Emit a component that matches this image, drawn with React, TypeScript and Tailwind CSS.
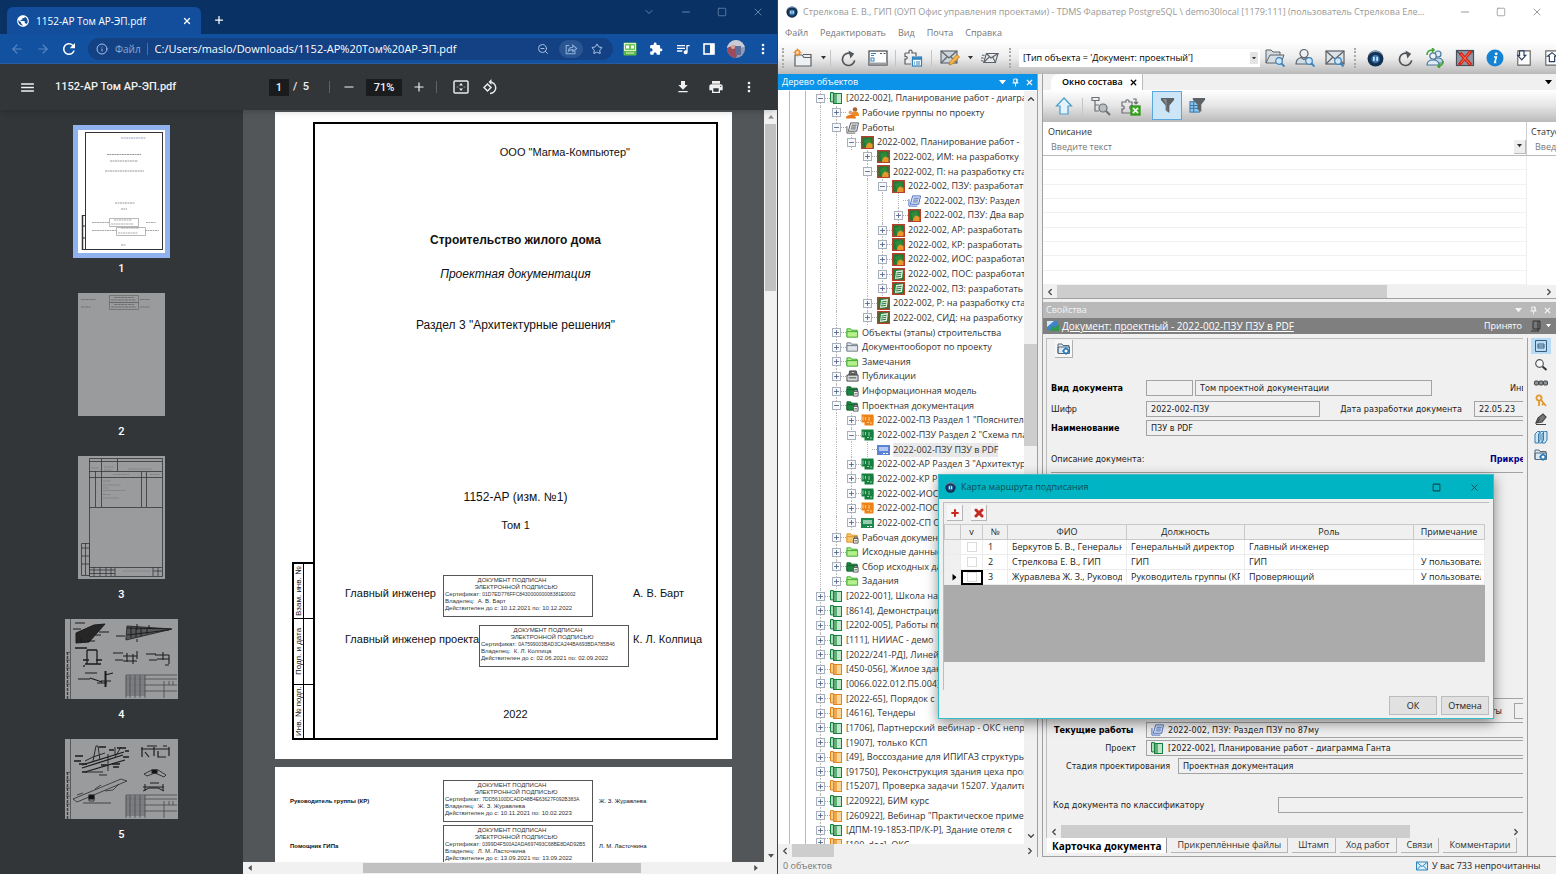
import React from 'react';
import {
    ArrowLeft, ArrowRight, ChevronDown, ChevronLeft, ChevronRight, ChevronUp, Info, Minus, Plus,
    Square, Star, X, ZoomOut,
} from 'lucide-react';
import {
    MdDownload, MdExtension, MdMenu, MdMoreVert, MdPrint, MdPublic, MdQueueMusic, MdRefresh,
} from 'react-icons/md';

type IconProps = { className?: string };

/* ---------- browser window ---------- */

const ShareIcon = () => (
    <svg viewBox="0 0 16 16" className="w-3.5 h-3.5" fill="none" stroke="#8fb1de" strokeWidth="1.2">
        <path d="M6 4H2.5v9.5h10V10" />
        <path d="M5 10.500C5.300 7.500 7.500 6 10 6V3.500L14.500 7.300 10 11V8.700C8 8.700 6.300 9 5 10.500Z" />
    </svg>
);

const RobotIcon = () => (
    <svg viewBox="0 0 14 14" className="w-3.5 h-3.5">
        <rect x="0.500" y="0.500" width="13" height="13" rx="1" fill="#5dbb46" />
        <path d="M1 1h12v8H1z" fill="#d9f3cf" />
        <rect x="2" y="2" width="10" height="6" rx="1" fill="#6cc455" />
        <rect x="3" y="3.500" width="3" height="3" fill="#fff" />
        <rect x="8" y="3.500" width="3" height="3" fill="#fff" />
        <path d="M3 11h8" stroke="#dff2d9" />
    </svg>
);

const PanelIcon = () => (
    <svg viewBox="0 0 12 12" className="w-3 h-3">
        <rect x="1" y="1" width="10" height="10" fill="none" stroke="#fff" strokeWidth="1.600" />
        <rect x="7" y="1" width="4" height="10" fill="#fff" />
    </svg>
);

const AvatarIcon = () => (
    <svg viewBox="0 0 18 18" className="w-[18px] h-[18px]">
        <defs>
            <clipPath id="avatar"><circle cx="9" cy="9" r="9" /></clipPath>
        </defs>
        <g clipPath="url(#avatar)">
            <rect width="18" height="18" fill="#8f9ab5" />
            <path d="M0 0h18v7L0 9z" fill="#c9cbd6" />
            <path d="M0 8 7 5l5 5-3 8H0z" fill="#9b4b5c" />
            <path d="M8 6h6v9H9z" fill="#5d6f99" />
            <circle cx="6" cy="7" r="2" fill="#d7a89b" />
        </g>
    </svg>
);

const FitPageIcon = () => (
    <svg viewBox="0 0 16 14" className="w-4 h-3.5" fill="none" stroke="#e8eaed" strokeWidth="1.500">
        <rect x="1" y="1" width="14" height="12" rx="1" />
        <path d="M6 5.500 8 3l2 2.500zM6 8.500 8 11l2-2.500z" fill="#e8eaed" stroke="none" />
        <path d="M3.500 7h2M10.500 7h2" strokeWidth="1" opacity=".5" />
    </svg>
);

const RotateIcon = () => (
    <svg viewBox="0 0 16 16" className="w-4 h-4" fill="none" stroke="#e8eaed" strokeWidth="1.500">
        <path d="M5.500 5 9 8.500 5.500 12 2 8.500z" />
        <path d="M8 3a5.500 5.500 0 1 1 0 11.500" />
        <path d="M9.500 0 6.500 3l3 3z" fill="#e8eaed" stroke="none" />
    </svg>
);

const BrowserChrome = () => (
    <header className="flex-none text-white">
        <div className="h-[34px] bg-[#0a3163] flex items-end">
            <div className="ml-[7px] h-[27px] w-[194px] rounded-t-md bg-[#124e9c] flex items-center px-[9px]">
                <MdPublic className="w-3.5 h-3.5 mr-[6px]" />
                <span className="text-[10px] flex-1 whitespace-nowrap">1152-АР Том АР-ЭП.pdf</span>
                <button aria-label="Закрыть вкладку"><X className="w-[10px] h-[10px]" strokeWidth={3} /></button>
            </div>
            <button aria-label="Новая вкладка" className="ml-3 mb-2"><Plus className="w-3 h-3" strokeWidth={2.5} /></button>
            <div className="ml-auto self-start h-6 flex items-center gap-[25px] pr-[13px] text-[#6483ab]">
                <button aria-label="Поиск вкладок"><ChevronDown className="w-3 h-3" /></button>
                <button aria-label="Свернуть"><Minus className="w-3 h-3" /></button>
                <button aria-label="Развернуть"><Square className="w-[10px] h-[10px]" /></button>
                <button aria-label="Закрыть"><X className="w-3 h-3" /></button>
            </div>
        </div>
        <div className="h-[30px] bg-[#1250a0] border-b border-[#2a5c9f] flex items-center pl-[10px] pr-[12px]">
            <button aria-label="Назад" className="text-[#5a87c4] mr-3"><ArrowLeft className="w-3.5 h-3.5" /></button>
            <button aria-label="Вперёд" className="text-[#5a87c4] mr-[10px]"><ArrowRight className="w-3.5 h-3.5" /></button>
            <button aria-label="Обновить"><MdRefresh className="w-[18px] h-[18px]" /></button>
            <div className="ml-[10px] flex-1 h-[22px] rounded-full bg-[#134183] flex items-center pl-2">
                <Info className="w-3 h-3 text-[#a9c0e2]" />
                <label htmlFor="url" className="text-[10px] text-[#8ba8d2] ml-[7px] pr-[6px] border-r border-[#4c6fa5] leading-3">Файл</label>
                <input
                    id="url"
                    className="flex-1 min-w-0 ml-[7px] text-[11px] bg-transparent outline-none"
                    defaultValue="C:/Users/maslo/Downloads/1152-АР%20Том%20АР-ЭП.pdf"
                />
                <button aria-label="Масштаб" className="text-[#a9c0e2] mr-[10px]"><ZoomOut className="w-3 h-3" /></button>
                <button aria-label="Поделиться" className="w-6 h-[18px] rounded-full bg-[#2a5593] flex items-center justify-center mr-2"><ShareIcon /></button>
                <button aria-label="Закладка" className="text-[#b7cbe8] mr-[10px]"><Star className="w-3 h-3" /></button>
            </div>
            <div className="flex items-center ml-[10px] gap-3">
                <RobotIcon />
                <MdExtension className="w-3.5 h-3.5" />
                <MdQueueMusic className="w-4 h-4" />
                <PanelIcon />
                <AvatarIcon />
            </div>
            <button aria-label="Меню" className="ml-[10px] -mr-[6px]"><MdMoreVert className="w-4 h-4" /></button>
        </div>
    </header>
);

const PdfToolbar = () => (
    <div className="flex-none h-[46px] bg-[#323639] shadow-md relative flex items-center text-[#f1f1f1] font-[Roboto,sans-serif] text-[11px] font-medium">
        <button aria-label="Боковая панель" className="ml-[19px]"><MdMenu className="w-[17px] h-[17px]" /></button>
        <h1 className="ml-[19px] w-[214px] whitespace-nowrap">1152-АР Том АР-ЭП.pdf</h1>
        <input aria-label="Страница" defaultValue="1" className="w-5 h-[17px] bg-[#191b1c] text-center" />
        <span className="ml-1">/&nbsp; 5</span>
        <span className="w-px h-3 bg-[#5f6265] ml-5 mr-3" />
        <button aria-label="Уменьшить"><Minus className="w-3.5 h-3.5" /></button>
        <input aria-label="Масштаб страницы" defaultValue="71%" className="w-9 h-[17px] bg-[#191b1c] text-center mx-[10px]" />
        <button aria-label="Увеличить"><Plus className="w-3.5 h-3.5" /></button>
        <span className="w-px h-3 bg-[#5f6265] ml-[10px] mr-4" />
        <button aria-label="По размеру страницы"><FitPageIcon /></button>
        <button aria-label="Повернуть" className="ml-[13px]"><RotateIcon /></button>
        <div className="ml-auto flex items-center gap-[17px] pr-5">
            <button aria-label="Скачать"><MdDownload className="w-4 h-4" /></button>
            <button aria-label="Печать"><MdPrint className="w-4 h-4" /></button>
            <button aria-label="Ещё"><MdMoreVert className="w-4 h-4" /></button>
        </div>
    </div>
);

const ThumbTitle = () => (
    <svg viewBox="0 0 87 123" className="w-full h-full bg-white" fill="none" stroke="#333">
        <rect x="7.500" y="2.500" width="77" height="117" />
        <path d="M4 85.500h4M4 119.500h4M4 96h4M4 108h4" />
        <path d="M4.500 85v35" strokeWidth="1.500" />
        <g stroke="#999" strokeDasharray="2 .5">
            <path d="M43 8h25" stroke="#9aa2c2" />
            <path d="M29 24.500h34M32 31h28M27 41h39M37 73h20M43 79h6M43 115h5" />
            <path d="M14 92.500h17M14 100.500h24M68 92.500h10M67 100.500h14" stroke="#aaa" />
            <path d="M36 90h18M33 94h22M43 98h18M40 103h20" stroke="#aaa" />
        </g>
        <path d="M31.500 88.500h29v8h-29zM38.500 97.500h29v8h-29z" stroke="#999" strokeWidth=".7" />
    </svg>
);

const ThumbSigns = () => (
    <svg viewBox="0 0 87 123" className="w-full h-full bg-[#9a9b9d]" fill="none" stroke="#666">
        <path d="M3 6.500h15M3 14h10M62 6.500h10M62 14h10" strokeDasharray="2 .5" strokeWidth=".8" />
        <path d="M31.500 2.500h29v7h-29zM31.500 9.500h29v7h-29z" strokeWidth=".7" />
        <path d="M36 4.500h20M33 7h25M36 11.500h20M33 14h25" strokeDasharray="3 .5" strokeWidth=".8" />
    </svg>
);

const ThumbContents = () => (
    <svg viewBox="0 0 87 123" className="w-full h-full bg-[#9a9b9d]" fill="none" stroke="#33363a">
        <path d="M11.500 2.500h73v118h-73zM11 5.500h73M11 15.500h73M11 21.500h73M11 51.500h73M23.500 2.500v49M39.500 2.500v13M17.500 15v36M63.500 15v36M68.500 15v36M11 111.500h73" strokeWidth=".8" />
        <path d="M3.500 87.500h8v32h-8zM7.500 87v32M3 92h8M3 100h8M3 108h8M11 114h26M11 117.500h26M16 111v9M22 111v9M28 111v9M33 111v9M37 111v9M75 111v9M80 111v9M75 115h9" strokeWidth=".8" />
        <path d="M25 25h8M25 29h18M25 32h6M25 34.500h22M25 38.500h8M25 42h16M50 13h24M26 11h10M26 14h8M13 12h8M35 18.500h16M72 18.500h10M45 115h28" stroke="#777" strokeDasharray="2 .5" strokeWidth=".7" />
    </svg>
);

const SheetFrame = () => (
    <g strokeWidth=".7" stroke="#3a3d40">
        <path d="M5.500 0v80M1 33.500h4M1 41h4M1 49h4M1 57h4M1 65h4" />
        <path d="M2.500 33v47" strokeDasharray="3 1" strokeWidth="1.500" />
        <path d="M61 56v23M61 56h51M61 60h51M61 66h51M61 72h51M80 56v23M99 62v17M104 62v4M108 62v4" />
        <path d="M61 58h19M61 62h19M61 64h19M61 68h19M61 70h19M61 74h19M61 76h19M65 56v23M70 56v23M75 56v23" strokeWidth=".6" />
    </g>
);

const ThumbNodes = () => (
    <svg viewBox="0 0 113 80" className="w-full h-full bg-[#9a9b9d]" fill="none" stroke="#1d1d1d">
        <SheetFrame />
        <path d="M11 14 29 6l11-1-16 18-13 1z" fill="#262626" />
        <path d="M10 4h10M34 13h10M8 10h8M30 16h6M22 22h8M16 24v-5" strokeWidth="1.200" />
        <path d="m61 19 1-12 45 3-46 11z" fill="#55585a" strokeWidth=".8" />
        <path d="M62 9l44 1M62 16l42-5M66 8v11M71 9v9M76 9v8M82 10v5M51 17h9M72 5v6M84 6v4M72 20v3" strokeWidth="1" />
        <path d="M22 31h10M22 31v14M32 31v14M18 41h6M31 41h6M20 45h16M10 29h12M19 46v2" strokeWidth="1.300" />
        <path d="M48 34h10M58 37h14M58 42h14M50 41h8M62 34v9M68 35v10M72 32v8M81 35h10M90 36h14M84 41h8M92 40h12M98 33v8M104 36v9M100 46h4" strokeWidth="1.100" />
        <path d="M36 62h10M20 54h12M13 60h12M25 59l12 4M32 64h10M40 56l8-2" strokeWidth="1.200" />
        <path d="M40.500 52v16" strokeWidth="2" />
    </svg>
);

const ThumbRoof = () => (
    <svg viewBox="0 0 113 80" className="w-full h-full bg-[#9a9b9d]" fill="none" stroke="#1d1d1d">
        <SheetFrame />
        <path d="m17 26 42-13M17 29l41-13M20 33l40-12" strokeWidth="1.300" />
        <path d="M28 22 31 7h2l2 14M20 22l8-4 12-4M43 15v17M50 8v8M56 8l-6 10M22 33h16M34 36h8" strokeWidth=".9" />
        <path d="M34 8h7M44 11h5M52 9h9M10 17h8M9 22h7M14 25h8M60 12h4M58 18h6M47 25h8M36 26h6M48 28h6M17 33h5" strokeWidth="1.300" />
        <path d="m8 60 48-20 6 2-50 21zM30 50l6-4M40 52l8-1 6-6M24 57h5v5h-5zM18 64h28M12 56l6-2" strokeWidth=".7" />
        <rect x="24" y="56" width="5" height="4" fill="#111" />
        <path d="M76 10h28M77 8v10M89 8v9M104 8v9M80 13l4 5M93 12v6h8M82 7h10M98 7h4" strokeWidth="1.200" />
        <path d="m79 35 8-4h6l8 5-2 2-9-4-8 3z" strokeWidth=".8" />
        <rect x="87" y="31" width="5" height="3" fill="#111" />
        <path d="M78 48h21M80 45v7M98 45v7M78 52l6-3h9l6 3M85 44h9" strokeWidth="1" />
    </svg>
);

const thumbs = [
    { page: 1, art: <ThumbTitle />, box: 'w-[97px] h-[133px] border-[#8fb2ee]' },
    { page: 2, art: <ThumbSigns />, box: 'w-[97px] h-[133px] border-transparent' },
    { page: 3, art: <ThumbContents />, box: 'w-[97px] h-[133px] border-transparent' },
    { page: 4, art: <ThumbNodes />, box: 'w-[123px] h-[90px] border-transparent' },
    { page: 5, art: <ThumbRoof />, box: 'w-[123px] h-[90px] border-transparent' },
];

const Stamp = ({ cert, owner, from, to }: { cert: string; owner: string; from: string; to: string }) => (
    <div className="w-[150px] h-[42px] flex-none border border-[#555] text-[6px] leading-[7px] text-[#333] whitespace-nowrap overflow-hidden pt-px px-px">
        <p className="text-center pr-3">ДОКУМЕНТ ПОДПИСАН</p>
        <p className="text-center pr-1">ЭЛЕКТРОННОЙ ПОДПИСЬЮ</p>
        <p>Сертификат: <span className="text-[5px]">{cert}</span></p>
        <p>Владелец:&nbsp; {owner}</p>
        <p>Действителен до с: {from} по: {to}</p>
    </div>
);

const PdfPages = () => (
    <div className="flex-1 min-h-0 overflow-hidden pt-[2px] font-['Liberation_Sans',sans-serif] text-[#111]">
        <article className="w-[457px] mx-auto bg-white flex pt-[10px] pr-[14px] pb-[19px]">
            <div className="w-[38px] flex-none flex flex-col justify-end items-end">
                {[
                    { text: 'Взам. инв. №', h: 'h-[56px]' },
                    { text: 'Подп. и дата', h: 'h-[66px]' },
                    { text: 'Инв. № подп.', h: 'h-[56px]' },
                ].map((cell) => (
                    <div key={cell.text} className={`${cell.h} w-[21px] flex border-t border-l-2 border-black last:border-b-2 first:border-t-2`}>
                        <span className="w-[10px] border-l border-black text-[8px] leading-[9px] text-center whitespace-nowrap [writing-mode:vertical-rl] [text-orientation:sideways] rotate-180">
                            {cell.text}
                        </span>
                    </div>
                ))}
            </div>
            <div className="flex-1 border-2 border-black text-[11px] leading-4 pt-5 pb-4">
                <p className="text-right pr-[86px]">ООО "Магма-Компьютер"</p>
                <div className="text-center text-xs leading-4">
                    <h2 className="mt-[72px] font-bold">Строительство жилого дома</h2>
                    <p className="mt-[18px] italic">Проектная документация</p>
                    <p className="mt-[35px]">Раздел 3 "Архитектурные решения"</p>
                    <p className="mt-[156px]">1152-АР (изм. №1)</p>
                    <p className="mt-3 text-[11px]">Том 1</p>
                </div>
                <div className="mt-[42px] pl-[30px] flex">
                    <span className="w-[98px] pt-[10px] whitespace-nowrap">Главный инженер</span>
                    <Stamp cert="01D7ED776FFC843000000008381E0002" owner="А. В. Барт" from="10.12.2021" to="10.12.2022" />
                    <span className="ml-10 pt-[10px] whitespace-nowrap">А. В. Барт</span>
                </div>
                <div className="mt-2 pl-[30px] flex">
                    <span className="w-[134px] pt-[6px] whitespace-nowrap">Главный инженер проекта</span>
                    <Stamp cert="0A7599003BAD3CA244BA693BDA785B46" owner="К. Л. Колпица" from="02.06.2021" to="02.09.2022" />
                    <span className="ml-1 pt-[6px] whitespace-nowrap">К. Л. Колпица</span>
                </div>
                <p className="mt-[39px] text-center">2022</p>
            </div>
        </article>
        <article className="w-[457px] mx-auto mt-2 bg-white h-[200px] pt-[13px] pl-[15px] text-[6px] flex flex-col gap-[3px]">
            <div className="flex items-center">
                <b className="w-[153px]">Руководитель группы (КР)</b>
                <Stamp cert="7DD56100DCADD48B4E63627F092B383A" owner="Ж. З. Журавлева" from="10.11.2021" to="10.02.2023" />
                <span className="ml-[6px]">Ж. З. Журавлева</span>
            </div>
            <div className="flex items-center">
                <b className="w-[153px]">Помощник ГИПа</b>
                <Stamp cert="0399D4F500A2ADA697493C68BE8DAD92B5" owner="Л. М. Ласточкина" from="13.09.2021" to="13.09.2022" />
                <span className="ml-[6px]">Л. М. Ласточкина</span>
            </div>
        </article>
    </div>
);

const Browser = () => (
    <section className="w-1/2 flex flex-col min-w-0 border-r border-[#31435c]">
        <BrowserChrome />
        <PdfToolbar />
        <div className="flex-1 min-h-0 flex">
            <aside className="w-[243px] flex-none bg-[#323639] overflow-hidden pt-[15px]">
                <ol className="flex flex-col items-center gap-[13px] font-[Roboto,sans-serif]">
                    {thumbs.map((thumb) => (
                        <li key={thumb.page} className="flex flex-col items-center gap-1">
                            <div className={`border-[5px] ${thumb.box}`}>{thumb.art}</div>
                            <span className="text-[11px] leading-[13px] font-medium text-white">{thumb.page}</span>
                        </li>
                    ))}
                </ol>
            </aside>
            <main className="flex-1 min-w-0 bg-[#525659] flex flex-col">
                <div className="flex-1 min-h-0 flex">
                    <PdfPages />
                    <div className="w-[13px] flex-none bg-[#f1f1f1] flex flex-col items-center">
                        <Triangle className="w-[6px] my-[5px] rotate-180 text-[#888]" />
                        <span className="w-[11px] h-[167px] bg-[#c1c1c1]" />
                        <Triangle className="w-[6px] mt-auto mb-1 text-[#505050]" />
                    </div>
                </div>
                <div className="h-3 flex-none bg-[#f1f1f1] flex items-center pl-1 pr-[18px]">
                    <Triangle className="w-[6px] rotate-90 text-[#505050]" />
                    <span className="ml-[110px] w-[278px] h-[10px] bg-[#c1c1c1]" />
                    <Triangle className="w-[6px] -rotate-90 ml-auto text-[#505050]" />
                </div>
            </main>
        </div>
    </section>
);

/* ---------- TDMS icons ---------- */

const Triangle = ({ className }: IconProps) => (
    <svg viewBox="0 0 8 5" className={className} fill="currentColor"><path d="M0 0h8L4 5z" /></svg>
);

const PinIcon = () => (
    <svg viewBox="0 0 8 10" className="w-[7px] h-[9px]" fill="none" stroke="currentColor">
        <path d="M2 1h4v4.500H2zM.5 5.500h7M4 6v3.500M5.300 1v4" />
    </svg>
);

const AppLogo = ({ className }: IconProps) => (
    <svg viewBox="0 0 16 16" className={className}>
        <circle cx="8" cy="8" r="7.500" fill="#16304f" />
        <path d="M8 .5A7.500 7.500 0 0 1 15 6 8 8 0 0 0 1 6 7.500 7.500 0 0 1 8 .5z" fill="#7f9fc4" />
        <circle cx="8" cy="8.500" r="4" fill="#2f73b0" />
        <path d="M6.500 6.300v4M9.500 6.300v4" stroke="#eaf5ff" strokeWidth="1.400" />
    </svg>
);

const Lens = ({ x, y }: { x: number; y: number }) => (
    <g transform={`translate(${x} ${y})`}>
        <circle cx="4" cy="4" r="3.300" fill="#cfe6f7" stroke="#3d83bb" strokeWidth="1.200" />
        <path d="m6.500 6.500 3 3" stroke="#3d83bb" strokeWidth="1.800" />
    </g>
);

const NewFolder = () => (
    <svg viewBox="0 0 20 20" className="w-5 h-5" fill="none" stroke="#5b6066" strokeWidth="1.200">
        <path d="M2 7h7l2 2.500h7V18H2z" fill="#eef1f4" />
        <path d="M10 6.500h8v3" />
        <circle cx="4.500" cy="4.500" r="2.300" fill="#fbd9b3" stroke="#f08a24" strokeWidth="1.500" />
        <path d="M4.500.5v2M4.500 6.500v2M.5 4.500h2M6.500 4.500h2" stroke="#f08a24" strokeWidth="1.200" />
    </svg>
);

const Reload = () => (
    <svg viewBox="0 0 20 20" className="w-[19px] h-[19px]" fill="none" stroke="#50565b" strokeWidth="1.800">
        <path d="M16.500 12a6.500 6.500 0 1 1-4-7.200" />
        <path d="M10 1.500 16 5l-4 5z" fill="#50565b" stroke="none" />
    </svg>
);

const FormWindow = () => (
    <svg viewBox="0 0 20 18" className="w-5 h-[18px]" fill="none" stroke="#50565b">
        <rect x="1" y="2" width="18" height="14" fill="#fff" strokeWidth="1.300" />
        <path d="M1 14.500h18" stroke="#9a9fa4" strokeWidth="2" />
        <rect x="3" y="9" width="3" height="3" stroke="#3d83bb" />
        <path d="M3 4.500h5M3 6.500h3" stroke="#3d83bb" />
        <path d="M12 4.500h2M15.500 4.500h2" />
    </svg>
);

const PuzzleTable = () => (
    <svg viewBox="0 0 20 20" className="w-5 h-5" fill="none" stroke="#5b6066" strokeWidth="1.200">
        <path d="M2 5h4c-1-4 4-4 3 0h4v3M2 5v3.500c3-.5 3 3 0 2.500v5h6" fill="#eef0f2" />
        <rect x="9.500" y="9" width="9" height="9" fill="#fff" stroke="#2f80bd" />
        <path d="M9.500 10.500h9" stroke="#2f80bd" strokeWidth="2.500" />
        <path d="M11 14h1M13 14h4M11 16h1M13 16h4" stroke="#2f80bd" />
    </svg>
);

const MailPen = () => (
    <svg viewBox="0 0 20 18" className="w-5 h-[18px]" fill="none" stroke="#5b6066" strokeWidth="1.100">
        <rect x="1" y="2" width="16" height="12" fill="#cdd5dc" />
        <path d="m1 2 8 7 8-7M1 14l6-6M17 14l-6-6" />
        <path d="m9 16 1-3.500 7-7 2.500 2.500-7 7z" fill="#f6b14a" stroke="#b9781a" strokeWidth=".8" />
    </svg>
);

const MailFast = () => (
    <svg viewBox="0 0 20 16" className="w-[18px] h-4" fill="none" stroke="#5b6066" strokeWidth="1.200">
        <path d="M6 3h13l-3 10H3z" fill="#e6e9ec" />
        <path d="m6 3 5 5 8-5M3 13l6-6M16 13l-3-6M1 5h3M0 8h3M0 11h2" />
    </svg>
);

const FolderSearch = () => (
    <svg viewBox="0 0 20 20" className="w-5 h-5" fill="none" stroke="#5b6066">
        <path d="M1 15V2h5l2 2h7v3M1 15l4-8h14l-3 8z" fill="#d5dde4" />
        <Lens x={10} y={9} />
    </svg>
);

const UserSearch = () => (
    <svg viewBox="0 0 20 20" className="w-5 h-5" fill="none" stroke="#5b6066" strokeWidth="1.200">
        <circle cx="9" cy="5.500" r="4" fill="#eef1f4" />
        <path d="M1 16c0-5 3-6 5-6.500l3 2 3-2c2 .5 4 2 5 6.500z" fill="#cfdde8" />
        <Lens x={10} y={9} />
    </svg>
);

const MailSearch = () => (
    <svg viewBox="0 0 20 20" className="w-5 h-5" fill="none" stroke="#5b6066" strokeWidth="1.200">
        <rect x="1" y="3" width="18" height="13" fill="#dbe2e8" />
        <path d="m1 3 9 8 9-8M1 16l7-7M19 16l-7-7" />
        <Lens x={9} y={9} />
    </svg>
);

const UsersSync = () => (
    <svg viewBox="0 0 20 20" className="w-5 h-5" fill="none" stroke="#4a7798" strokeWidth="1.200">
        <circle cx="13" cy="6" r="3" fill="#dcebf5" />
        <path d="M9 15c0-4 2-5 4-5s5 1 5 5z" fill="#bcd8ea" />
        <circle cx="8" cy="8" r="3.200" fill="#eef1f4" />
        <path d="M2 17c0-4 3-5 6-5s6 1 6 5z" fill="#dcebf5" />
        <path d="M2 7c0-4 3-5 6-5M7 0l2 2-2 2M18 13c0 4-2 5-5 5.500M15 16l-2 2.500 2 1.500" stroke="#3fa535" strokeWidth="1.600" />
    </svg>
);

const MailDelete = () => (
    <svg viewBox="0 0 20 20" className="w-5 h-5" fill="none" stroke="#46505a" strokeWidth="1.200">
        <rect x="1.500" y="2.500" width="17" height="15" fill="#8f99a4" />
        <path d="m1.500 3 8.500 7 8.500-7" />
        <path d="m5 5 11 12M16 3 4 17" stroke="#d8261c" strokeWidth="3.400" />
        <path d="m6 6 9 10M15 4 6 15" stroke="#f47a5c" strokeWidth="1" />
    </svg>
);

const InfoBall = () => (
    <svg viewBox="0 0 18 18" className="w-[18px] h-[18px]">
        <circle cx="9" cy="9" r="8.500" fill="#1583d3" />
        <circle cx="10.200" cy="4.800" r="1.400" fill="#fff" />
        <path d="M8 8h2.300l-1.500 5.500h1.500" fill="none" stroke="#fff" strokeWidth="1.600" />
    </svg>
);

const SheetIn = () => (
    <svg viewBox="0 0 18 20" className="w-4 h-[18px]" fill="none" stroke="#3c4147" strokeWidth="1.300">
        <path d="M2 2h14v16H2z" fill="#fff" stroke="#666" />
        <path d="M4 2h5v5h2l-4.500 5L2 7h2z" fill="#fff" stroke="#263e63" />
    </svg>
);

const SheetOut = () => (
    <svg viewBox="0 0 18 20" className="w-4 h-[18px] flex-none" fill="none" stroke="#3c4147" strokeWidth="1.300">
        <path d="M2 2h14v16H2z" fill="#fff" stroke="#666" />
        <path d="M6 14V8H4l5-4 5 4h-2v6z" fill="#fff" stroke="#263e63" />
    </svg>
);

const HomeUp = () => (
    <svg viewBox="0 0 18 18" className="w-[18px] h-[18px]">
        <path d="M9 1 1.500 9H5v8h8V9h3.500z" fill="#e3f3fd" stroke="#4a9ccc" strokeWidth="1.200" />
    </svg>
);

const TreeSearch = () => (
    <svg viewBox="0 0 20 20" className="w-5 h-5" fill="none" stroke="#6b6f73" strokeWidth="1.200">
        <path d="M1 1.500h7v3H1zM4 5v10h4M4 9h4" />
        <circle cx="12" cy="12" r="4" fill="#b9bec2" />
        <path d="m15 15 4 4" strokeWidth="2" />
    </svg>
);

const PuzzleExcel = () => (
    <svg viewBox="0 0 20 20" className="w-5 h-5" fill="none" stroke="#6b6f73" strokeWidth="1.200">
        <path d="M1 6h4c-1-3 3.500-3 3 0h3v4c-3-.5-3 3.500 0 3v4H1v-4c3 .5 3-3.500 0-3zM12 3h3v4M13 6l2 2 2-2" />
        <rect x="10" y="10" width="9" height="9" fill="#43b02a" stroke="#2c8a1a" />
        <path d="m12 12 5 5M17 12l-5 5" stroke="#fff" strokeWidth="1.600" />
    </svg>
);

const Funnel = ({ className }: IconProps) => (
    <svg viewBox="0 0 16 18" className={className}>
        <path d="M1 1h14v2l-5 6v8l-4-3V9L1 3z" fill="#5d6266" />
        <path d="M3 2h4l1 14-1-1V9z" fill="#83888c" />
    </svg>
);

const FunnelTable = () => (
    <svg viewBox="0 0 18 18" className="w-[17px] h-[17px]">
        <rect x="1" y="5" width="10" height="11" fill="#8fc3e8" stroke="#2f74a8" />
        <path d="M1 9h10M1 12h10M5 5v11" stroke="#2f74a8" />
        <path d="M4 1h13v2l-4 5v8l-4-3V8L4 3z" fill="#5d6266" />
    </svg>
);

const Book = ({ color, light }: { color: string; light: string }) => (
    <svg viewBox="0 0 12 12" className="w-3 h-3 flex-none">
        <rect x="3.500" y="1.500" width="8" height="10" fill={light} stroke={color} />
        <path d="M4 2h3v9H4z" fill={color} opacity=".55" />
        <rect x=".5" y=".5" width="3" height="9.500" rx="1.200" fill={light} stroke={color} strokeWidth="1.200" />
    </svg>
);

const People = () => (
    <svg viewBox="0 0 14 12" className="w-3.5 h-3 flex-none">
        <circle cx="9" cy="2.500" r="2.300" fill="#a5643a" />
        <path d="M5 8c0-3 2-3.500 4-3.500S13 5 13 9H5z" fill="#f08a24" />
        <circle cx="4.500" cy="5.500" r="2" fill="#d9a47d" />
        <path d="M0 11.500C0 8.500 2 8 4.500 8S10 8.500 10 11.500z" fill="#e8781a" />
    </svg>
);

const Papers = ({ color }: { color: string }) => (
    <svg viewBox="0 0 14 12" className="w-[13px] h-3 flex-none" fill="none" stroke={color}>
        <path d="M1 4v7.500h9" />
        <path d="M5 .5h8.500l-2 9H2.500z" fill="#e8edf5" />
        <path d="M6 3h5.500M5.500 5h5.500M5 7h5.500" />
    </svg>
);

const Task = ({ done }: { done?: boolean }) => (
    <svg viewBox="0 0 13 13" className="w-[13px] h-[13px] flex-none">
        <rect x=".7" y=".7" width="11.600" height="11.600" fill="#1f7a37" stroke="#b8402a" strokeWidth="1.400" />
        {done ? (
            <g>
                <path d="m4 3 7-1-1 8-7 1z" fill="#dff0e2" />
                <path d="m4.500 5 5-.7M4.200 7l5-.7M4 9l5-.7" stroke="#2a7a3c" />
            </g>
        ) : (
            <g>
                <path d="m3 4 6-2 2 6-6 3z" fill="#2f8a3a" />
                <path d="M5 12c0-3 1-4 3-5.500L11.500 8v4z" fill="#e8962c" />
            </g>
        )}
    </svg>
);

const Folder = ({ color, light, lock }: { color: string; light: string; lock?: boolean }) => (
    <svg viewBox="0 0 14 12" className="w-[13px] h-3 flex-none">
        <path d="M1 10V1.500h4l1 1.500h6v2" fill={light} stroke={color} />
        <path d="M1 10.500V4.500h11.500v6z" fill={light} stroke={color} />
        {lock && <path d="M8 6.500h5v5H8zM9 6.500V5h3v1.500M9 9h3" fill="#f3f3f3" stroke="#555" />}
    </svg>
);

const Printer = () => (
    <svg viewBox="0 0 14 12" className="w-[13px] h-3 flex-none" stroke="#444">
        <path d="M3 5 4 .5h7L12 5z" fill="#777" />
        <path d="M5.500 1.500h4v2h-4z" fill="#fff" />
        <path d="M1 5h12v6.500H1z" fill="#d7dadd" />
        <path d="M3 8h8" />
    </svg>
);

const Volume = ({ color }: { color: string }) => (
    <svg viewBox="0 0 13 12" className="w-[13px] h-3 flex-none">
        <path d="M.5.5h12v8h-12z" fill={color} />
        <path d="M3.500 2.500h9v9h-9z" fill={color} />
        <path d="M2 2.500v4M4.500 3v3M8 3v4M6 8.500h2M10 8v2" stroke="#fff" opacity=".6" />
    </svg>
);

const Sheet = ({ color }: { color: string }) => (
    <svg viewBox="0 0 13 12" className="w-[13px] h-3 flex-none">
        <rect x=".5" y="1.500" width="12" height="9" fill={color} stroke={color} />
        <path d="M2 3h9v4H2z" fill="#fff" opacity=".55" />
        <path d="M6 9.500h2M9 9.500h2" stroke="#fff" />
    </svg>
);

const PictureDoc = () => (
    <svg viewBox="0 0 12 12" className="w-3 h-3">
        <path d="M0 1h11v9H0z" fill="#3f83c9" />
        <path d="M0 1h7L0 7z" fill="#d5e8f8" />
        <path d="m3 11 3-5 2 2 4-4v7z" fill="#2f9a4a" />
    </svg>
);

const FolderGear = () => (
    <svg viewBox="0 0 14 14" className="w-3.5 h-3.5" fill="none" stroke="#56697a">
        <path d="M1 11V2h4l1 1.500h6V6M1 11.500V5h11.500v6.500z" fill="#dbe9f3" />
        <circle cx="9" cy="9" r="2.300" fill="#fff" stroke="#2476b3" strokeWidth="1.500" />
        <path d="M9 5v1.500M9 11.500V13M5 9h1.500M11.500 9H13" stroke="#2476b3" />
    </svg>
);

/* ---------- object tree ---------- */

const icons: Record<string, React.ReactNode> = {
    green: <Book color="#15803d" light="#bfe6c8" />,
    orange: <Book color="#e0851c" light="#fbd598" />,
    people: <People />,
    papers: <Papers color="#555" />,
    note: <Papers color="#3f66bd" />,
    task: <Task />,
    done: <Task done />,
    folder: <Folder color="#3aa52c" light="#b4f08c" />,
    grayFolder: <Folder color="#6b7780" light="#dfe5ea" />,
    locked: <Folder color="#14632f" light="#1c8541" lock />,
    lockedOrange: <Folder color="#e0942c" light="#f8c86c" lock />,
    printer: <Printer />,
    volGreen: <Volume color="#15803d" />,
    volOrange: <Volume color="#ee8215" />,
    sheetBlue: <Sheet color="#5b83d8" />,
    sheetGreen: <Sheet color="#1c8a4a" />,
};

// level, icon, text, state: + collapsed, - expanded, empty for a leaf
const tree: [number, string, string, string][] = [
    [0, 'green', '[2022-002], Планирование работ - диаграмма', '-'],
    [1, 'people', 'Рабочие группы по проекту', '+'],
    [1, 'papers', 'Работы', '-'],
    [2, 'task', '2022-002, Планирование работ -', '-'],
    [3, 'task', '2022-002, ИМ: на разработку', '+'],
    [3, 'task', '2022-002, П: на разработку стадии', '-'],
    [4, 'task', '2022-002, ПЗУ: разработать', '-'],
    [5, 'note', '2022-002, ПЗУ: Раздел', ''],
    [5, 'task', '2022-002, ПЗУ: Два варианта', '+'],
    [4, 'task', '2022-002, АР: разработать', '+'],
    [4, 'task', '2022-002, КР: разработать', '+'],
    [4, 'task', '2022-002, ИОС: разработать', '+'],
    [4, 'done', '2022-002, ПОС: разработать', '+'],
    [4, 'done', '2022-002, ПЗ: разработать', '+'],
    [3, 'done', '2022-002, Р: на разработку стадии', '+'],
    [3, 'done', '2022-002, СИД: на разработку', '+'],
    [1, 'folder', 'Объекты (этапы) строительства', '+'],
    [1, 'grayFolder', 'Документооборот по проекту', '+'],
    [1, 'folder', 'Замечания', '+'],
    [1, 'printer', 'Публикации', '+'],
    [1, 'locked', 'Информационная модель', '+'],
    [1, 'locked', 'Проектная документация', '-'],
    [2, 'volOrange', '2022-002-ПЗ Раздел 1 "Пояснительная', '+'],
    [2, 'volGreen', '2022-002-ПЗУ Раздел 2 "Схема планировки', '-'],
    [3, 'sheetBlue', '2022-002-ПЗУ ПЗУ в PDF', ''],
    [2, 'volGreen', '2022-002-АР Раздел 3 "Архитектурные', '+'],
    [2, 'volGreen', '2022-002-КР Раздел 4', '+'],
    [2, 'volGreen', '2022-002-ИОС Раздел 5', '+'],
    [2, 'volOrange', '2022-002-ПОС Раздел 6', '+'],
    [2, 'sheetGreen', '2022-002-СП Состав', '+'],
    [1, 'lockedOrange', 'Рабочая документация', '+'],
    [1, 'folder', 'Исходные данные', '+'],
    [1, 'locked', 'Сбор исходных данных', '+'],
    [1, 'folder', 'Задания', '+'],
    [0, 'green', '[2022-001], Школа на', '+'],
    [0, 'green', '[8614], Демонстрация', '+'],
    [0, 'green', '[2202-005], Работы по', '+'],
    [0, 'green', '[111], НИИАС - демо', '+'],
    [0, 'green', '[2022/241-РД], Линейный', '+'],
    [0, 'orange', '[450-056], Жилое здание', '+'],
    [0, 'green', '[0066.022.012.П5.004]', '+'],
    [0, 'orange', '[2022-65], Порядок с', '+'],
    [0, 'orange', '[4616], Тендеры', '+'],
    [0, 'green', '[1706], Партнерский вебинар - ОКС непро', '+'],
    [0, 'green', '[1907], только КСП', '+'],
    [0, 'orange', '[49], Воссоздание для ИПИГАЗ структуры', '+'],
    [0, 'green', '[91750], Реконструкция здания цеха прои', '+'],
    [0, 'orange', '[15207], Проверка задачи 15207. Удалить', '+'],
    [0, 'green', '[220922], БИМ курс', '+'],
    [0, 'orange', '[260922], Вебинар "Практическое применение', '+'],
    [0, 'green', '[ДПМ-19-1853-ПР/К-Р], Здание отеля с', '+'],
    [0, 'orange', '[100_doc], ОКС', '+'],
];

const guides = ['w-3', 'w-4', 'w-[15px]', 'w-4', 'w-[15px]', 'w-4', 'w-[15px]', 'w-4'];

const TreeRow = ({ row, index }: { row: [number, string, string, string]; index: number }) => {
    const [level, icon, text, state] = row;
    const last = index === tree.length - 1;
    return (
        <li className={`flex overflow-hidden ${last ? 'h-[6px] flex-none' : 'flex-1 min-h-0 items-center'}`}>
            {guides.slice(0, level + 3).map((width, i) => (
                <span
                    key={i}
                    className={`${width} flex-none self-stretch border-r ${i < 2 ? '' : 'border-dotted'} ${i === 4 && level > 2 && index < 16 ? 'border-transparent' : 'border-[#b9b9b9]'}`}
                />
            ))}
            {state ? (
                <button aria-label="Развернуть узел" className="-ml-[5px] w-[9px] h-[9px] flex-none border border-[#a9b0bd] bg-[#f8f9fb] text-[#566488] flex items-center justify-center">
                    {state === '+' ? <Plus className="w-[7px] h-[7px]" strokeWidth={3} /> : <Minus className="w-[7px] h-[7px]" strokeWidth={3} />}
                </button>
            ) : (
                <span className="w-1 flex-none" />
            )}
            <span className="w-[5px] flex-none border-t border-dotted border-[#aaa]" />
            <span className="w-4 flex-none">{icons[icon]}</span>
            <span className={`whitespace-nowrap leading-[14px] ${icon === 'sheetBlue' ? 'bg-[#e9e9e9]' : ''}`}>{text}</span>
        </li>
    );
};

const HScroll = ({ thumb }: { thumb: string }) => (
    <div className="h-[13px] flex-none bg-[#f0f0f0] flex items-center text-[#444]">
        <ChevronLeft className="w-[10px] h-[10px] mx-[2px]" strokeWidth={3} />
        <div className="flex-1 self-stretch flex"><span className={`${thumb} bg-[#cdcdcd]`} /></div>
        <ChevronRight className="w-[10px] h-[10px] mx-[2px]" strokeWidth={3} />
    </div>
);

const TreePane = () => (
    <aside className="w-[260px] flex-none flex flex-col border-r border-[#a0a0a0]">
        <div className="h-4 flex-none bg-[#0a93e8] text-white flex items-center pl-1 pr-[3px]">
            <h2 className="flex-1">Дерево объектов</h2>
            <button aria-label="Меню панели"><Triangle className="w-[7px] mr-[6px]" /></button>
            <button aria-label="Закрепить" className="mr-[6px]"><PinIcon /></button>
            <button aria-label="Закрыть панель"><X className="w-[9px] h-[9px]" strokeWidth={3} /></button>
        </div>
        <div className="flex-1 min-h-0 flex bg-white pt-px">
            <ul className="flex-1 min-w-0 overflow-hidden flex flex-col">
                {tree.map((row, i) => <TreeRow key={i} row={row} index={i} />)}
            </ul>
            <div className="w-[13px] flex-none bg-[#f0f0f0] flex flex-col items-center text-[#444]">
                <ChevronUp className="w-[10px] h-[10px] mt-[3px] flex-none" strokeWidth={3} />
                <div className="flex-1 w-full pt-[240px]"><span className="block h-[21%] bg-[#cdcdcd]" /></div>
                <ChevronDown className="w-[10px] h-[10px] mb-[3px] flex-none" strokeWidth={3} />
            </div>
        </div>
        <HScroll thumb="w-[18%]" />
    </aside>
);

/* ---------- composition and properties ---------- */

const ToolButton = ({ label, className = 'w-[30px] justify-center', children }: { label: string; className?: string; children: React.ReactNode }) => (
    <button aria-label={label} className={`${className} h-full flex-none flex items-center overflow-hidden`}>{children}</button>
);

const Grip = () => <span className="w-[10px] h-5 flex-none flex justify-center"><i className="border-l-2 border-dotted border-[#aaa]" /></span>;

const MainToolbar = () => (
    <div className="h-8 flex-none flex items-center bg-gradient-to-b from-white via-[#ececec] to-[#b9b9b9]">
        <Grip />
        <ToolButton label="Создать"><NewFolder /></ToolButton>
        <ToolButton label="Варианты создания" className="w-[10px] justify-center"><Triangle className="w-[5px]" /></ToolButton>
        <i className="w-px h-4 mx-[2px] bg-[#c4c4c4]" />
        <ToolButton label="Обновить"><Reload /></ToolButton>
        <ToolButton label="Форма"><FormWindow /></ToolButton>
        <i className="w-px h-4 mx-[2px] bg-[#c4c4c4]" />
        <ToolButton label="Модули"><PuzzleTable /></ToolButton>
        <i className="w-px h-4 mx-[3px] bg-[#c4c4c4]" />
        <ToolButton label="Написать письмо"><MailPen /></ToolButton>
        <ToolButton label="Варианты письма" className="w-[10px] justify-center"><Triangle className="w-[5px]" /></ToolButton>
        <ToolButton label="Отправить"><MailFast /></ToolButton>
        <Grip />
        <div className="flex-1 min-w-0 h-[18px] bg-white flex items-center ml-1 pr-[2px]">
            <select aria-label="Фильтр по типу объекта" className="flex-1 min-w-0 pl-1 appearance-none text-black bg-white">
                <option>[Тип объекта = 'Документ: проектный']</option>
            </select>
            <span className="w-2 h-3 bg-[#e4e4e4] flex items-center justify-center"><Triangle className="w-1" /></span>
        </div>
        <ToolButton label="Поиск объектов"><FolderSearch /></ToolButton>
        <ToolButton label="Поиск пользователей"><UserSearch /></ToolButton>
        <ToolButton label="Поиск писем"><MailSearch /></ToolButton>
        <Grip />
        <ToolButton label="TDMS"><AppLogo className="w-[17px] h-[17px]" /></ToolButton>
        <ToolButton label="Обновить всё"><Reload /></ToolButton>
        <ToolButton label="Синхронизация"><UsersSync /></ToolButton>
        <ToolButton label="Удалить письмо"><MailDelete /></ToolButton>
        <ToolButton label="Справка"><InfoBall /></ToolButton>
        <ToolButton label="Взять" className="w-[30px] pl-[6px]"><SheetIn /></ToolButton>
        <ToolButton label="Вернуть" className="w-4 pl-1"><SheetOut /></ToolButton>
    </div>
);

const Composition = () => (
    <section className="h-[209px] flex-none flex flex-col bg-white border-b border-[#a0a0a0]">
        <div className="h-[31px] flex-none flex items-center pl-[6px] bg-gradient-to-b from-white via-[#e6e6e6] to-[#bdbdbd]">
            <ToolButton label="Вверх"><HomeUp /></ToolButton>
            <i className="w-px h-4 mx-[3px] bg-[#c4c4c4]" />
            <ToolButton label="Найти в дереве"><TreeSearch /></ToolButton>
            <ToolButton label="Выгрузить в Excel"><PuzzleExcel /></ToolButton>
            <button aria-label="Фильтр" className="w-[30px] h-[29px] ml-[6px] bg-[#cce6f8] border border-[#5aa7dc] flex items-center justify-center">
                <Funnel className="w-[15px] h-[17px]" />
            </button>
            <ToolButton label="Фильтр таблицы"><FunnelTable /></ToolButton>
        </div>
        <div className="h-[35px] flex-none flex border-t border-b border-[#bbb] text-[#333]">
            <div className="flex-1 min-w-0 border-r border-[#ccc] pl-[5px] pt-[2px]">
                <label htmlFor="f-desc" className="block leading-[15px]">Описание</label>
                <div className="flex items-center">
                    <input id="f-desc" placeholder="Введите текст" className="flex-1 min-w-0 pl-[3px] leading-[15px] placeholder:text-[#777]" />
                    <span className="w-3 h-[14px] bg-[#eee] border-r border-b border-[#bbb] flex items-center justify-center"><Triangle className="w-[5px]" /></span>
                </div>
            </div>
            <div className="w-[29px] flex-none overflow-hidden whitespace-nowrap pl-1 pt-[2px]">
                <label htmlFor="f-status" className="block leading-[15px]">Статус</label>
                <input id="f-status" placeholder="Введите текст" className="pl-1 leading-[15px] placeholder:text-[#777]" />
            </div>
        </div>
        <div className="flex-1 flex">
            <div className="flex-1 flex flex-col border-r border-[#eee]">
                {Array.from({ length: 9 }, (_, i) => <div key={i} className="flex-1 border-b border-[#f1f1f1]" />)}
            </div>
            <div className="w-[29px]" />
        </div>
        <HScroll thumb="w-[68%]" />
    </section>
);

const field = 'h-4 border border-[#a3a3a3] bg-[#f0f0f0] px-1 min-w-0 outline-none';

const RecordCard = () => (
    <form className="flex-1 min-w-0 flex flex-col overflow-hidden border-t border-l border-[#bdbdbd] font-['DejaVu_Sans_Condensed','DejaVu_Sans',sans-serif] text-[#222]">
        <div className="pl-1 pt-px">
            <button type="button" aria-label="Настройка карточки" className="ml-1 w-[18px] h-[18px] bg-[#f7f7f7] border-r border-b border-[#b0b0b0] flex items-center justify-center"><FolderGear /></button>
            <div className="mt-[22px] flex items-center whitespace-nowrap">
                <label htmlFor="kind" className="w-[95px] flex-none font-bold text-black">Вид документа</label>
                <input aria-label="Код вида" className={`${field} w-[47px]`} />
                <input id="kind" defaultValue="Том проектной документации" className={`${field} w-[237px] ml-[2px]`} />
                <span className="ml-auto w-[13px] overflow-hidden">Инв. №</span>
            </div>
            <div className="mt-[5px] flex items-center whitespace-nowrap">
                <label htmlFor="code" className="w-[95px] flex-none">Шифр</label>
                <input id="code" defaultValue="2022-002-ПЗУ" className={`${field} w-[174px]`} />
                <label htmlFor="date" className="ml-auto mr-3">Дата разработки документа</label>
                <input id="date" defaultValue="22.05.23" className={`${field} w-[49px] border-r-0`} />
            </div>
            <div className="mt-[3px] flex items-center">
                <label htmlFor="name" className="w-[95px] flex-none font-bold text-black">Наименование</label>
                <input id="name" defaultValue="ПЗУ в PDF" className={`${field} flex-1 border-r-0`} />
            </div>
            <div className="mt-4 flex items-center whitespace-nowrap">
                <span className="flex-1">Описание документа:</span>
                <a href="#attach" className="w-[33px] overflow-hidden font-bold text-[#00008b]">Прикрепить</a>
            </div>
            <div className="mt-[6px] border-t border-[#a3a3a3]" />
        </div>
        <div className="mt-auto pl-1">
            <div className="border-t border-[#a3a3a3] flex items-center justify-end pt-1 gap-3">
                <label htmlFor="sheets">Листы</label>
                <input id="sheets" className={`${field} w-[8px] border-r-0`} />
            </div>
            <div className="mt-[3px] flex items-center whitespace-nowrap">
                <label htmlFor="works" className="w-[95px] flex-none font-bold text-black pl-[3px]">Текущие работы</label>
                <div className={`${field} flex-1 flex items-center gap-1 border-r-0`}><Papers color="#3f66bd" />
                    <input id="works" defaultValue="2022-002, ПЗУ: Раздел ПЗУ по 87му" className="flex-1 min-w-0 outline-none" /></div>
            </div>
            <div className="mt-[2px] flex items-center whitespace-nowrap">
                <label htmlFor="project" className="w-[95px] flex-none text-right pr-[10px]">Проект</label>
                <div className={`${field} flex-1 flex items-center gap-[5px] border-r-0`}>{icons.green}
                    <input id="project" defaultValue="[2022-002], Планирование работ - диаграмма Ганта" className="flex-1 min-w-0 outline-none" /></div>
            </div>
            <div className="mt-[2px] flex items-center whitespace-nowrap">
                <label htmlFor="stage" className="w-[127px] flex-none pl-[15px]">Стадия проектирования</label>
                <input id="stage" defaultValue="Проектная документация" className={`${field} flex-1 border-r-0`} />
            </div>
            <div className="mt-[23px] mb-3 flex items-center whitespace-nowrap">
                <label htmlFor="class" className="w-[227px] flex-none pl-[2px]">Код документа по классификатору</label>
                <input id="class" className={`${field} flex-1 border-r-0`} />
            </div>
        </div>
        <HScroll thumb="w-[78%]" />
    </form>
);

const CardTabs = () => (
    <nav className="h-[15px] flex-none flex items-stretch gap-1 pl-px text-[#333] leading-[14px] whitespace-nowrap">
        <button className="bg-white px-[5px] text-[10px] font-bold text-black border-r border-[#999]">Карточка документа</button>
        {['Прикреплённые файлы', 'Штамп', 'Ход работ', 'Связи', 'Комментарии'].map((tab) => (
            <button key={tab} className="px-[6px] border-r border-b border-[#b5b5b5]">{tab}</button>
        ))}
    </nav>
);

const SideTools = () => (
    <div className="w-[29px] flex-none border-l border-[#a0a0a0] flex flex-col items-center gap-1 text-[#3b4248] pr-[2px]">
        <button aria-label="Карточка" className="w-5 h-4 bg-[#b9dcf6] flex items-center justify-center">
            <svg viewBox="0 0 12 12" className="w-3 h-3" fill="none" stroke="#3a5e7c"><path d="M.5.5h11v11H.5zM3 4h6M3 6h6M3 8h6M3 4v4M9 4v4" /></svg>
        </button>
        <button aria-label="Просмотр">
            <svg viewBox="0 0 14 14" className="w-3.5 h-3.5" fill="none" stroke="#555"><circle cx="5.500" cy="5.500" r="3.800" fill="#f7fafc" strokeWidth="1.200" /><path d="m8.500 8.500 4 3.500" stroke="#333" strokeWidth="2" /></svg>
        </button>
        <button aria-label="Ссылки">
            <svg viewBox="0 0 14 14" className="w-3.5 h-3.5" fill="#8b9299" stroke="#444"><rect x=".5" y="5" width="4" height="4" rx="1" /><rect x="5" y="5" width="4" height="4" rx="1" /><rect x="9.500" y="5" width="4" height="4" rx="1" /></svg>
        </button>
        <button aria-label="Права">
            <svg viewBox="0 0 14 14" className="w-3.5 h-3.5" fill="none" stroke="#e0982a" strokeWidth="1.800"><circle cx="5" cy="4" r="2.600" /><path d="m7 6 5 6M5 7v5M9.500 9.500 8 11" /></svg>
        </button>
        <button aria-label="Подпись">
            <svg viewBox="0 0 14 14" className="w-3.5 h-3.5" fill="none" stroke="#444" strokeWidth="1.200"><path d="m2 11 2-5 5-4 3 3-4 5z" fill="#777" /><path d="M2 12.500h10M2 11l4-4" /></svg>
        </button>
        <button aria-label="Версии">
            <svg viewBox="0 0 14 14" className="w-3.5 h-3.5" fill="#cfe7f6" stroke="#3a7dab"><path d="M1 4 3.500 1.500H6V10l-2 3H1zM4.500 4 7 1.500h2.500V10l-2 3h-3zM8 4l2.500-2.500H13V10l-2 3H8z" /></svg>
        </button>
        <button aria-label="Настройки"><FolderGear /></button>
    </div>
);

const Properties = () => (
    <section className="flex-1 min-h-0 flex flex-col mt-[3px] bg-[#f0f0f0] border-b border-[#a0a0a0]">
        <div className="h-4 flex-none bg-[#b9b9b9] text-[#f3f3f3] flex items-center pl-[3px] pr-[4px]">
            <h2 className="flex-1">Свойства</h2>
            <button aria-label="Меню свойств"><Triangle className="w-[7px] mr-2" /></button>
            <button aria-label="Закрепить свойства" className="mr-[6px]"><PinIcon /></button>
            <button aria-label="Закрыть свойства"><X className="w-[9px] h-[9px]" strokeWidth={3} /></button>
        </div>
        <div className="h-4 flex-none bg-[#7f7f7f] text-white flex items-center pl-1 pr-[5px]">
            <PictureDoc />
            <a href="#document" className="flex-1 ml-[3px] text-[10px] underline whitespace-nowrap">Документ: проектный - 2022-002-ПЗУ ПЗУ в PDF</a>
            <span className="mr-[8px]">Принято</span>
            <svg viewBox="0 0 12 12" className="w-3 h-3 mr-1" fill="#777" stroke="#333"><path d="M3 1h7v8H3zM1 11h8M8 1v10" /></svg>
            <Triangle className="w-[5px]" />
        </div>
        <div className="flex-1 min-h-0 flex pt-1">
            <div className="flex-1 min-w-0 flex flex-col pl-[3px] pr-1 pb-[3px]">
                <RecordCard />
                <CardTabs />
            </div>
            <SideTools />
        </div>
    </section>
);

/* ---------- signing route dialog ---------- */

const route = [
    ['1', 'Беркутов Б. В., Генеральный', 'Генеральный директор', 'Главный инженер', ''],
    ['2', 'Стрелкова Е. В., ГИП', 'ГИП', 'ГИП', 'У пользователя'],
    ['3', 'Журавлева Ж. З., Руководитель', 'Руководитель группы (КР)', 'Проверяющий', 'У пользователя'],
];

const RouteDialog = () => (
    <div role="dialog" aria-labelledby="route-title" className="absolute left-[160px] right-[62px] top-[474px] bg-[#f0f0f0] border border-[#37bcc8] shadow-[0_4px_12px_rgba(0,0,0,0.45)] text-[#222]">
        <div className="h-6 bg-[#00b4c4] flex items-center pl-[6px] pr-[13px] text-[#0d4c55]">
            <AppLogo className="w-[11px] h-[11px]" />
            <h2 id="route-title" className="ml-[5px] flex-1">Карта маршрута подписания</h2>
            <button aria-label="Развернуть окно" className="mr-[28px]"><Square className="w-[9px] h-[9px]" strokeWidth={3} /></button>
            <button aria-label="Закрыть окно"><X className="w-[11px] h-[11px]" /></button>
        </div>
        <div className="mx-1 mt-[3px] border-t border-l border-[#bdbdbd] pr-1 pb-7">
            <div className="flex gap-2 px-[3px] pt-[2px] pb-[3px]">
                <button aria-label="Добавить" className="w-4 h-4 border-r border-b border-[#b5b5b5] bg-[#f7f7f7] flex items-center justify-center text-[#cf2a1e]"><Plus className="w-[10px] h-[10px]" strokeWidth={5} /></button>
                <button aria-label="Удалить" className="w-4 h-4 border-r border-b border-[#b5b5b5] bg-[#f7f7f7] flex items-center justify-center text-[#c32a20]"><X className="w-[12px] h-[12px]" strokeWidth={6} /></button>
            </div>
            <div className="bg-[#ababab] pb-[77px]">
                <table className="w-full table-fixed border-collapse bg-white whitespace-nowrap leading-[14px]">
                    <thead>
                        <tr className="h-[15px] bg-[#f0f0f0] [&>th]:font-normal [&>th]:border [&>th]:border-[#c9c9c9] [&>th]:p-0">
                            <th className="w-4" />
                            <th className="w-[22px]">v</th>
                            <th className="w-[25px]">№</th>
                            <th className="w-[119px]">ФИО</th>
                            <th className="w-[118px]">Должность</th>
                            <th>Роль</th>
                            <th className="w-[71px]">Примечание</th>
                        </tr>
                    </thead>
                    <tbody>
                        {route.map(([num, name, post, role, note]) => (
                            <tr key={num} className="h-[15px] [&>td]:border [&>td]:border-[#ececec] [&>td]:py-0 [&>td]:overflow-hidden">
                                <td className="bg-[#f0f0f0] pl-[6px]">{num === '3' && <Triangle className="w-[7px] -rotate-90 text-black" />}</td>
                                <td className={num === '3' ? 'outline-2 -outline-offset-2 outline-black' : ''}>
                                    <input type="checkbox" aria-label={`Строка ${num}`} className="block mx-auto w-[10px] h-[10px] appearance-none border border-[#dcdcdc]" />
                                </td>
                                <td className="pl-[5px]">{num}</td>
                                <td className="px-1"><div className="overflow-hidden">{name}</div></td>
                                <td className="px-1"><div className="overflow-hidden">{post}</div></td>
                                <td className="px-1">{role}</td>
                                <td className="pl-[7px] pr-[3px]"><div className="overflow-hidden">{note}</div></td>
                            </tr>
                        ))}
                    </tbody>
                </table>
            </div>
        </div>
        <div className="flex justify-end gap-1 pt-[6px] pb-[3px] pr-1">
            <button className="w-[48px] h-[19px] bg-[#e1e1e1] border border-[#bcbcbc]">ОК</button>
            <button className="w-[48px] h-[19px] bg-[#e1e1e1] border border-[#bcbcbc]">Отмена</button>
        </div>
    </div>
);

const Tdms = () => (
    <section className="w-1/2 min-w-0 relative flex flex-col bg-[#f0f0f0] text-[#333]">
        <div className="h-6 flex-none bg-white flex items-center pl-2 pr-[13px] text-[#999]">
            <AppLogo className="w-[12px] h-[12px] flex-none" />
            <h1 className="ml-[5px] flex-1 min-w-0 whitespace-nowrap">
                Стрелкова Е. В., ГИП (ОУП Офис управления проектами) - TDMS Фарватер PostgreSQL \ demo30local [1179:111] (пользователь Стрелкова Еле...
            </h1>
            <div className="flex flex-none gap-[25px]">
                <button aria-label="Свернуть программу"><Minus className="w-3 h-3" /></button>
                <button aria-label="Развернуть программу"><Square className="w-[10px] h-[10px]" /></button>
                <button aria-label="Закрыть программу"><X className="w-3 h-3" /></button>
            </div>
        </div>
        <nav className="h-[18px] flex-none bg-white flex items-center gap-3 pl-[7px] text-[#777]">
            {['Файл', 'Редактировать', 'Вид', 'Почта', 'Справка'].map((item) => <button key={item}>{item}</button>)}
        </nav>
        <MainToolbar />
        <div className="flex-1 min-h-0 flex gap-1">
            <TreePane />
            <div className="flex-1 min-w-0 flex flex-col border-l border-[#a0a0a0]">
                <div className="h-4 flex-none flex items-stretch pl-2 pr-1">
                    <button className="bg-white flex items-center gap-[6px] pl-[11px] pr-1 border-r border-[#bbb] font-semibold text-black rounded-tl-lg">
                        Окно состава <X className="w-[9px] h-[9px]" strokeWidth={3.5} />
                    </button>
                    <Triangle className="w-[7px] ml-auto self-center text-black" />
                </div>
                <Composition />
                <Properties />
            </div>
        </div>
        <footer className="h-[17px] flex-none flex items-center pl-[5px] text-[#777]">
            <span className="flex-1">0 объектов</span>
            <svg viewBox="0 0 12 10" className="w-3 h-[10px]" fill="#d9effb" stroke="#2b86bb"><path d="M.5 1h11v8H.5zM.5 1 6 5.500 11.500 1M.5 9l4-4M11.500 9l-4-4" /></svg>
            <span className="ml-1 mr-4 w-[108px] overflow-hidden whitespace-nowrap text-[#222]">У вас 733 непрочитанных</span>
        </footer>
        <RouteDialog />
    </section>
);

const App = () => (
    <div className="h-screen w-full flex overflow-hidden bg-[#f0f0f0] font-['Open_Sans','Noto_Sans',sans-serif] text-[9px] leading-[14px] [&_svg]:block">
        <Browser />
        <Tdms />
    </div>
);

export default App;
